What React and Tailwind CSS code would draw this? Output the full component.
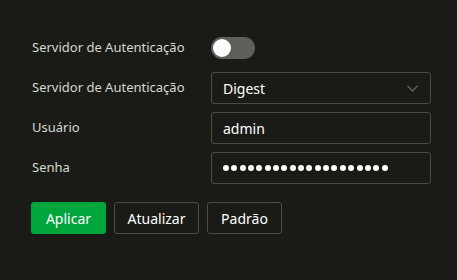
import React, { useState } from 'react';

const Row = ({ label, children }) => (
  <div className="flex items-center h-8">
    <div className="w-[179px] shrink-0 text-[#d6d8d4]">{label}</div>
    {children}
  </div>
);

const Box = ({ children }) => (
  <div className="w-[220px] h-8 border border-[#4a4b48] rounded-[3px] flex items-center pl-[11px] pr-3 text-white">
    {children}
  </div>
);

export default function App() {
  const [enabled, setEnabled] = useState(false);

  return (
    <div
      className="w-[457px] h-[280px] bg-[#1a1b17] pl-8 pt-8 text-[13px]"
      style={{ fontFamily: '"Noto Sans", "Open Sans", sans-serif' }}
    >
      <div className="flex flex-col gap-2">
        <Row label="Servidor de Autenticação">
          <button
            onClick={() => setEnabled(!enabled)}
            className="w-[44px] h-[22px] rounded-full bg-[#5e5f5b] p-[2px] flex items-center"
          >
            <span className="w-[18px] h-[18px] rounded-full bg-white block" />
          </button>
        </Row>

        <Row label="Servidor de Autenticação">
          <Box>
            <span className="flex-1 text-[14px]">Digest</span>
            <svg width="11" height="7" viewBox="0 0 11 7" fill="none" stroke="#6b6c68" strokeWidth="1.2">
              <path d="M0.5 0.8 L5.5 5.8 L10.5 0.8" />
            </svg>
          </Box>
        </Row>

        <Row label="Usuário">
          <Box>
            <span className="text-[14px]">admin</span>
          </Box>
        </Row>

        <Row label="Senha">
          <Box>
            <div className="flex gap-[2.35px]">
              {Array.from({ length: 20 }).map((_, i) => (
                <span key={i} className="w-[6px] h-[6px] rounded-full bg-white block" />
              ))}
            </div>
          </Box>
        </Row>
      </div>

      <div className="flex gap-2 mt-[18px] -ml-px">
        <button className="w-[75px] h-8 rounded-[3px] bg-[#00a53c] text-white text-[14px]">Aplicar</button>
        <button className="w-[85px] h-8 rounded-[3px] border border-[#4a4b48] text-white text-[14px]">Atualizar</button>
        <button className="w-[75px] h-8 rounded-[3px] border border-[#4a4b48] text-white text-[14px]">Padrão</button>
      </div>
    </div>
  );
}
